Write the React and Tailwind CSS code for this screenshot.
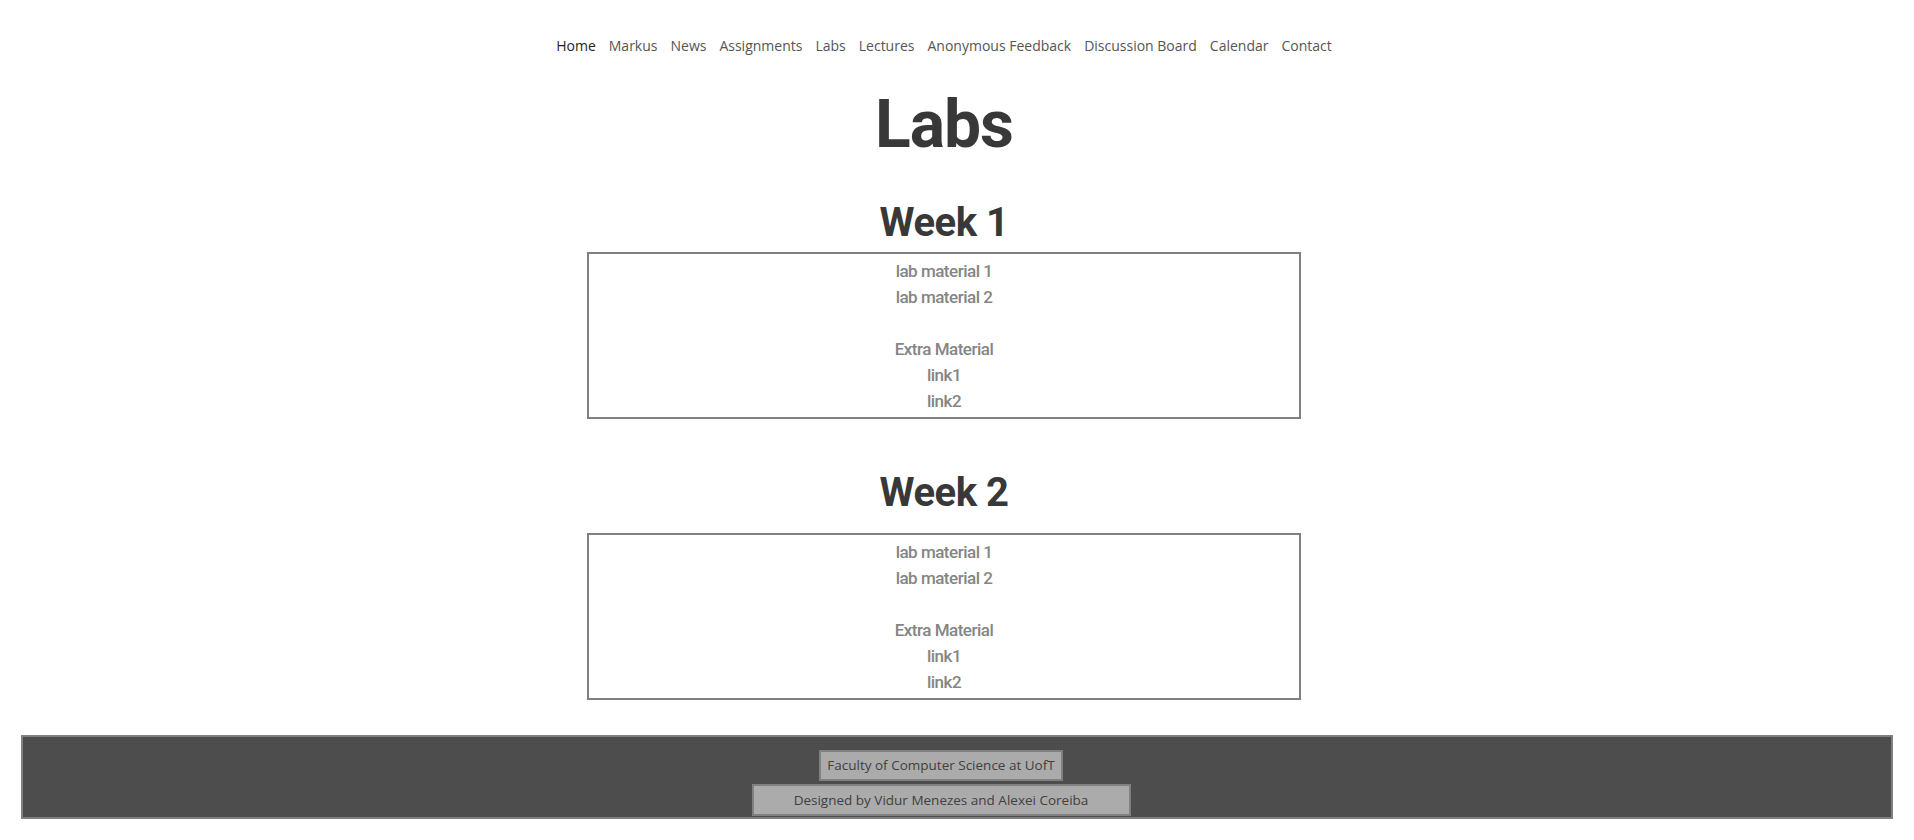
export default function App() {
  const navItems = [
    "Home",
    "Markus",
    "News",
    "Assignments",
    "Labs",
    "Lectures",
    "Anonymous Feedback",
    "Discussion Board",
    "Calendar",
    "Contact",
  ];

  const Box = ({ className }) => (
    <div
      className={
        "mx-auto w-[714px] border-2 border-[#808080] pt-[4px] pb-[3px] text-center text-[17px] leading-[26px] font-medium tracking-[-0.5px] text-[#858585] font-['Roboto',sans-serif] " +
        className
      }
    >
      <div className="h-[26px]">lab material 1</div>
      <div className="h-[26px]">lab material 2</div>
      <div className="h-[26px]"></div>
      <div className="h-[26px]">Extra Material</div>
      <div className="h-[26px]">link1</div>
      <div className="h-[26px]">link2</div>
    </div>
  );

  return (
    <div className="min-h-[840px] bg-white flex flex-col">
      <div className="pr-[26px]">
        <nav className="pt-[36px] flex justify-center gap-[13px] text-[14px] leading-5 font-['Open_Sans',sans-serif]">
          {navItems.map((item, i) => (
            <a
              key={item}
              className={i === 0 ? "text-[#1f1f1f]" : "text-[#555555]"}
            >
              {item}
            </a>
          ))}
        </nav>
        <h1 className="mt-[36px] text-center text-[66px] leading-[66px] font-bold text-[#383838] tracking-[-1px] font-['Roboto',sans-serif]">
          Labs
        </h1>
        <h2 className="mt-[45px] text-center text-[40px] leading-[40px] font-bold text-[#383838] tracking-[-0.5px] font-['Roboto',sans-serif]">
          Week 1
        </h2>
        <Box className="mt-[9px]" />
        <h2 className="mt-[54px] text-center text-[40px] leading-[40px] font-bold text-[#383838] tracking-[-0.5px] font-['Roboto',sans-serif]">
          Week 2
        </h2>
        <Box className="mt-[20px]" />
      </div>
      <footer className="mx-[21px] mt-[35px] mb-[21px] border-2 border-[#808080] bg-[#4d4d4d] pt-[13px] pb-[1px] pr-[32px] flex flex-col items-center gap-[3px] font-['Open_Sans',sans-serif] text-[13.5px] text-[#404040]">
        <div className="w-[244px] h-[31px] border-2 border-[#808080] bg-[#ababab] flex items-center justify-center">
          Faculty of Computer Science at UofT
        </div>
        <div className="w-[379px] h-[32px] border-2 border-[#808080] bg-[#ababab] flex items-center justify-center">
          Designed by Vidur Menezes and Alexei Coreiba
        </div>
      </footer>
    </div>
  );
}
